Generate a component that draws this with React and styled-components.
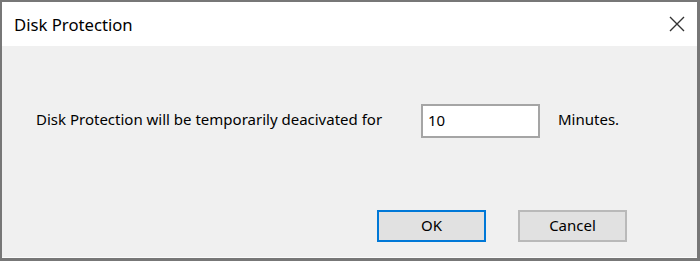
import React, { useState } from 'react';
import styled, { createGlobalStyle } from 'styled-components';

const GlobalStyle = createGlobalStyle`
  html, body {
    margin: 0;
    padding: 0;
    background: #f0f0f0;
  }
  * {
    box-sizing: border-box;
  }
`;

const Window = styled.div`
  width: 700px;
  height: 261px;
  display: flex;
  flex-direction: column;
  background: #f0f0f0;
  border: 2px solid #777777;
  border-right-width: 3px;
  border-bottom-width: 3px;
  font-family: "Noto Sans", "Open Sans", sans-serif;
  color: #000;
  box-shadow: inset 0 -1px 0 #fbfbfb;
`;

const TitleBar = styled.div`
  height: 44px;
  background: #fff;
  display: flex;
  align-items: center;
  justify-content: space-between;
  padding-left: 12px;
  flex-shrink: 0;
`;

const Title = styled.span`
  font-size: 16.7px;
  color: #000;
`;

const CloseButton = styled.button`
  width: 46px;
  height: 44px;
  margin-right: -3px;
  border: none;
  background: transparent;
  display: flex;
  align-items: center;
  justify-content: center;
  padding: 0;
  cursor: pointer;
`;

const Body = styled.div`
  flex: 1;
  display: flex;
  flex-direction: column;
  padding: 58px 70px 0 34px;
`;

const MessageRow = styled.div`
  display: flex;
  align-items: center;
  height: 34px;
`;

const Label = styled.span`
  width: 385px;
  font-size: 15px;
  padding-bottom: 5px;
`;

const MinutesInput = styled.input`
  width: 119px;
  height: 34px;
  border: 2px solid #a5a5a5;
  background: #fff;
  font-family: inherit;
  font-size: 15px;
  padding: 0 5px 3px;
  color: #000;
  outline: none;
`;

const Unit = styled.span`
  margin-left: 18px;
  font-size: 15px;
  padding-bottom: 5px;
`;

const ButtonRow = styled.div`
  display: flex;
  justify-content: flex-end;
  gap: 32px;
  margin-top: 72px;
`;

const DialogButton = styled.button`
  width: 109px;
  height: 32px;
  background: #e1e1e1;
  border: ${p => (p.$primary ? '2px solid #0078d7' : '2px solid #b9b9b9')};
  font-family: inherit;
  font-size: 15px;
  color: #000;
  padding: 0 0 2px;
  cursor: pointer;
`;

export default function App() {
  const [minutes, setMinutes] = useState('10');

  return (
    <>
      <GlobalStyle />
      <Window>
        <TitleBar>
          <Title>Disk Protection</Title>
          <CloseButton aria-label="Close">
            <svg width="16" height="16" viewBox="0 0 16 16">
              <path d="M1 1 L15 15 M15 1 L1 15" stroke="#333" strokeWidth="1.4" fill="none" />
            </svg>
          </CloseButton>
        </TitleBar>
        <Body>
          <MessageRow>
            <Label>Disk Protection will be temporarily deacivated for</Label>
            <MinutesInput value={minutes} onChange={e => setMinutes(e.target.value)} />
            <Unit>Minutes.</Unit>
          </MessageRow>
          <ButtonRow>
            <DialogButton $primary>OK</DialogButton>
            <DialogButton>Cancel</DialogButton>
          </ButtonRow>
        </Body>
      </Window>
    </>
  );
}
